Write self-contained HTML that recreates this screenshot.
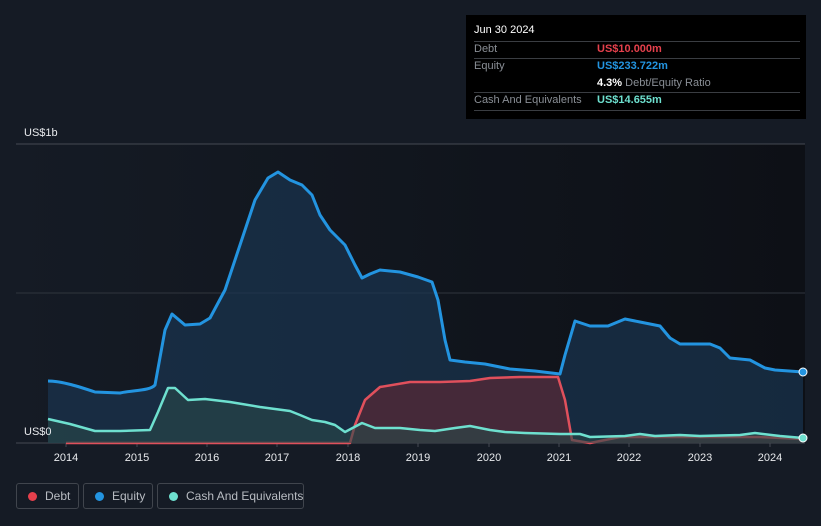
<!DOCTYPE html>
<html><head><style>
html,body{margin:0;width:821px;height:526px;overflow:hidden}
body{background:#151b25;font-family:"Liberation Sans",sans-serif;position:relative}
.tt{position:absolute;left:466px;top:15px;width:340px;height:104px;background:#000;font-size:11px;color:#8a8f96;white-space:nowrap}
.tt .r{position:absolute;left:8px;right:6px;border-top:1px solid #3a3d42}
.leg{position:absolute;top:483px;height:26px;border:1px solid #40454d;border-radius:3px;font-size:12px;color:#b8bcc2;line-height:24px;box-sizing:border-box;white-space:nowrap}
.leg i{position:absolute;left:11px;top:8px;width:9px;height:9px;border-radius:50%}
.leg span{position:absolute;left:28px}
</style></head><body>
<svg width="821" height="526" style="position:absolute;left:0;top:0">
<defs><linearGradient id="bg" x1="0" x2="1"><stop offset="0" stop-color="#151b25"/><stop offset="1" stop-color="#0d1016"/></linearGradient></defs>
<rect x="16" y="144" width="789" height="299" fill="url(#bg)"/>
<line x1="16" y1="144" x2="805" y2="144" stroke="#454a52"/>
<line x1="16" y1="293" x2="805" y2="293" stroke="#30353d"/>
<line x1="16" y1="443" x2="805" y2="443" stroke="#454a52"/>
<g stroke="#454a52"><line x1="66" y1="443" x2="66" y2="447"/><line x1="137" y1="443" x2="137" y2="447"/><line x1="207" y1="443" x2="207" y2="447"/><line x1="277" y1="443" x2="277" y2="447"/><line x1="348" y1="443" x2="348" y2="447"/><line x1="418" y1="443" x2="418" y2="447"/><line x1="489" y1="443" x2="489" y2="447"/><line x1="559" y1="443" x2="559" y2="447"/><line x1="629" y1="443" x2="629" y2="447"/><line x1="700" y1="443" x2="700" y2="447"/><line x1="770" y1="443" x2="770" y2="447"/></g>
<path d="M48,381 C62,381 80,387 95,392 L120,393 C133,390 150,391 155,385 L165,330 172,314 185,325 200,324 210,318 225,290 240,245 255,200 268,178 278,172 290,180 302,185 312,195 320,215 330,230 345,245 355,265 362,278 370,274 380,270 400,272 418,277 432,282 438,300 445,340 450,360 465,362 485,364 510,369 535,371 560,374 565,355 575,321 590,326 608,326 625,319 640,322 660,326 670,338 680,344 710,344 720,348 730,358 750,360 765,368 775,370 803,372 L803,443 48,443Z" fill="#1a3550" fill-opacity=".7" stroke="none"/>
<path d="M48,381 C62,381 80,387 95,392 L120,393 C133,390 150,391 155,385 L165,330 172,314 185,325 200,324 210,318 225,290 240,245 255,200 268,178 278,172 290,180 302,185 312,195 320,215 330,230 345,245 355,265 362,278 370,274 380,270 400,272 418,277 432,282 438,300 445,340 450,360 465,362 485,364 510,369 535,371 560,374 565,355 575,321 590,326 608,326 625,319 640,322 660,326 670,338 680,344 710,344 720,348 730,358 750,360 765,368 775,370 803,372" fill="none" stroke="#2394e0" stroke-width="3" stroke-linejoin="round"/>
<path d="M350,443 L355,425 365,400 380,387 410,382 440,382 470,381 490,378 520,377 558,377 565,400 572,440 590,443 620,437 680,437 760,437 803,439 L803,443Z" fill="#5a2a36" fill-opacity=".7"/>
<path d="M66,443 L350,443 355,425 365,400 380,387 410,382 440,382 470,381 490,378 520,377 558,377 565,400 572,440 590,443 620,437 680,437 760,437 803,439" fill="none" stroke="#e0505c" stroke-width="2.5" stroke-linejoin="round"/>
<path d="M48,419 L70,424 95,431 120,431 150,430 158,412 168,388 175,388 188,400 205,399 230,402 260,407 290,411 300,415 312,420 325,422 335,425 345,432 362,423 375,428 400,428 420,430 435,431 455,428 470,426 490,430 505,432 525,433 560,434 580,434 590,437 625,436 640,434 655,436 680,435 700,436 740,435 755,433 780,436 803,438 L803,443 48,443Z" fill="#2a4a4a" fill-opacity=".6"/>
<path d="M48,419 L70,424 95,431 120,431 150,430 158,412 168,388 175,388 188,400 205,399 230,402 260,407 290,411 300,415 312,420 325,422 335,425 345,432 362,423 375,428 400,428 420,430 435,431 455,428 470,426 490,430 505,432 525,433 560,434 580,434 590,437 625,436 640,434 655,436 680,435 700,436 740,435 755,433 780,436 803,438" fill="none" stroke="#6ee0cf" stroke-width="2.5" stroke-linejoin="round"/>
<circle cx="803" cy="372" r="4" fill="#2394e0" stroke="#fff" stroke-width="1"/>
<circle cx="803" cy="438" r="4" fill="#6ee0cf" stroke="#fff" stroke-width="1"/>
<g font-size="11" fill="#e8eaed" text-anchor="middle"><text x="66" y="461">2014</text><text x="137" y="461">2015</text><text x="207" y="461">2016</text><text x="277" y="461">2017</text><text x="348" y="461">2018</text><text x="418" y="461">2019</text><text x="489" y="461">2020</text><text x="559" y="461">2021</text><text x="629" y="461">2022</text><text x="700" y="461">2023</text><text x="770" y="461">2024</text></g>
<text x="24" y="136" font-size="11" fill="#e8eaed">US$1b</text>
<text x="24" y="435" font-size="11" fill="#e8eaed">US$0</text>
</svg>
<div class="tt">
<div style="position:absolute;left:8px;top:9px;color:#fff">Jun 30 2024</div>
<div class="r" style="top:26px"></div>
<div style="position:absolute;left:8px;top:28px">Debt</div><div style="position:absolute;left:131px;top:28px;color:#e5404c;font-weight:bold">US$10.000m</div>
<div class="r" style="top:43px"></div>
<div style="position:absolute;left:8px;top:45px">Equity</div><div style="position:absolute;left:131px;top:45px;color:#2394e0;font-weight:bold">US$233.722m</div>
<div style="position:absolute;left:131px;top:62px"><b style="color:#fff">4.3%</b> Debt/Equity Ratio</div>
<div class="r" style="top:77px"></div>
<div style="position:absolute;left:8px;top:79px">Cash And Equivalents</div><div style="position:absolute;left:131px;top:79px;color:#6ee0cf;font-weight:bold">US$14.655m</div>
<div class="r" style="top:95px"></div>
</div>
<div class="leg" style="left:16px;width:63px"><i style="background:#e5404c"></i><span>Debt</span></div>
<div class="leg" style="left:83px;width:70px"><i style="background:#2394e0"></i><span>Equity</span></div>
<div class="leg" style="left:157px;width:147px"><i style="background:#6ee0cf"></i><span>Cash And Equivalents</span></div>
</body></html>
